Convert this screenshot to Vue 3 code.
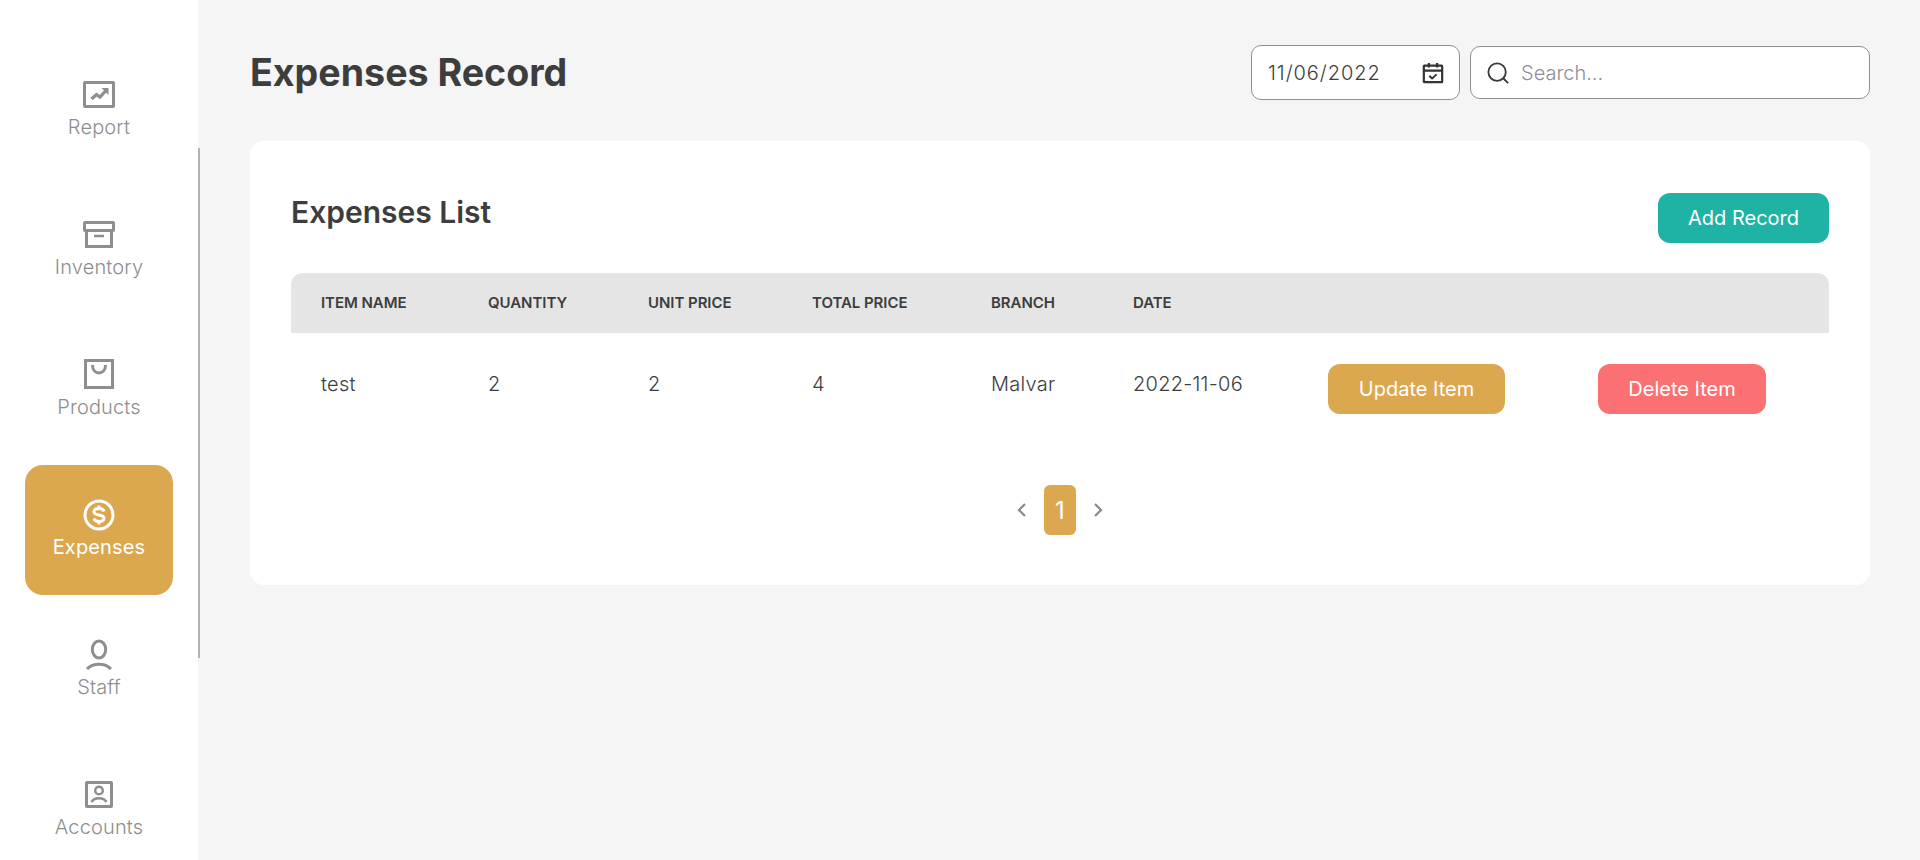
<script setup>
const navItems = [
  { label: 'Report', icon: 'report' },
  { label: 'Inventory', icon: 'inventory' },
  { label: 'Products', icon: 'products' },
  { label: 'Expenses', icon: 'expenses', active: true },
  { label: 'Staff', icon: 'staff' },
  { label: 'Accounts', icon: 'accounts' }
]
const headers = ['ITEM NAME', 'QUANTITY', 'UNIT PRICE', 'TOTAL PRICE', 'BRANCH', 'DATE', '', '']
const row = ['test', '2', '2', '4', 'Malvar', '2022-11-06']
</script>

<template>
  <div class="page">
    <aside class="sidebar">
      <nav class="nav">
        <a v-for="item in navItems" :key="item.label" class="nav-item" :class="{ active: item.active }">
          <svg class="nav-icon" viewBox="0 0 32 32" fill="none" stroke="currentColor" stroke-width="3">
            <template v-if="item.icon === 'report'">
              <rect x="1.500" y="3.500" width="29" height="24" rx="0.500" />
              <path d="M8.500 20l5-4.500 3.500 2.500 5.500-6" stroke-width="3.200" />
              <path d="M18.500 9h7v7z" fill="currentColor" stroke="none" />
            </template>
            <template v-else-if="item.icon === 'inventory'">
              <rect x="1.500" y="3.500" width="29" height="8" rx="0.500" />
              <path d="M3.500 11.500v16h25v-16" />
              <path d="M11 17h10" stroke-width="2.500" />
            </template>
            <template v-else-if="item.icon === 'products'">
              <path d="M2.500 1.500h27v27h-27z" />
              <path d="M9.500 6c0 10.500 13 10.500 13 0" />
            </template>
            <template v-else-if="item.icon === 'expenses'">
              <circle cx="16" cy="16" r="14" />
              <path d="M21 12.500c-.5-1.800-2.500-3-5-3-3 0-5 1.200-5 3.200 0 2.200 2.300 2.800 5 3.300s5 1.100 5 3.300c0 2-2 3.200-5 3.200-2.500 0-4.500-1.200-5-3" stroke-width="3" />
              <path d="M16 6.500v3M16 22.500v3" stroke-width="3" />
            </template>
            <template v-else-if="item.icon === 'staff'">
              <ellipse cx="16" cy="10.500" rx="6.700" ry="8.500" />
              <path d="M4 30c6-6.500 18-6.500 24 0" />
            </template>
            <template v-else>
              <rect x="3.500" y="3.500" width="25" height="24" rx="0.500" />
              <circle cx="16" cy="11.500" r="3.800" stroke-width="2.500" />
              <path d="M8.500 23c3-5 12-5 15 0" stroke-width="2.500" />
            </template>
          </svg>
          <span class="nav-label">{{ item.label }}</span>
        </a>
      </nav>
      <div class="scroll-thumb"></div>
    </aside>

    <main class="main">
      <header class="top">
        <h1 class="title">Expenses Record</h1>
        <div class="filters">
          <div class="date-field">
            <span class="date-value">11/06/2022</span>
            <svg class="cal" viewBox="0 0 24 24" fill="none" stroke="#333" stroke-width="2.400">
              <rect x="2" y="4" width="20" height="18" rx="0.500" />
              <path d="M2 9.500h20M7.500 1v5M16.500 1v5" />
              <path d="M8 15l3 3 5-4.500" stroke-width="2" />
            </svg>
          </div>
          <div class="search-field">
            <svg class="search-icon" viewBox="0 0 24 24" fill="none" stroke="#3a3a3a" stroke-width="2">
              <circle cx="11" cy="11" r="9.500" />
              <path d="M18 18l5 5" />
            </svg>
            <span class="placeholder">Search...</span>
          </div>
        </div>
      </header>

      <section class="card">
        <div class="card-head">
          <h2 class="card-title">Expenses List</h2>
          <button class="btn teal">Add Record</button>
        </div>
        <table class="table">
          <colgroup>
            <col class="c1" /><col class="c2" /><col class="c3" /><col class="c4" />
            <col class="c5" /><col class="c6" /><col class="c7" /><col class="c8" />
          </colgroup>
          <thead>
            <tr>
              <th v-for="(h, i) in headers" :key="i">{{ h }}</th>
            </tr>
          </thead>
          <tbody>
            <tr>
              <td v-for="(c, i) in row" :key="i"><span class="cell-text">{{ c }}</span></td>
              <td><button class="btn gold">Update Item</button></td>
              <td><button class="btn red">Delete Item</button></td>
            </tr>
          </tbody>
        </table>
        <div class="pager">
          <svg class="chev" viewBox="0 0 12 16" fill="none" stroke="#8a8a8a" stroke-width="2.200"><path d="M9 2L3 8l6 6" /></svg>
          <span class="page-num">1</span>
          <svg class="chev" viewBox="0 0 12 16" fill="none" stroke="#8a8a8a" stroke-width="2.200"><path d="M3 2l6 6-6 6" /></svg>
        </div>
      </section>
    </main>
  </div>
</template>

<style>
html, body { margin: 0; height: 100%; overflow: hidden; background: #f5f5f5; }
</style>

<style scoped>
.page {
  display: flex;
  height: 860px;
  overflow: hidden;
  background: #f5f5f5;
  font-family: Inter, "Liberation Sans", sans-serif;
  color: #3d3d3d;
}
.sidebar {
  position: relative;
  z-index: 1;
  flex: 0 0 198px;
  background: #fff;
}
.nav {
  display: flex;
  flex-direction: column;
  gap: 10px;
  padding: 45px 25px 0;
}
.nav-item {
  flex: 0 0 130px;
  display: flex;
  flex-direction: column;
  align-items: center;
  padding-top: 34px;
  box-sizing: border-box;
  border-radius: 18px;
  color: #8e8e8e;
}
.nav-item.active {
  background: #dba84f;
  color: #fff;
}
.nav-icon {
  width: 32px;
  height: 32px;
}
.nav-label {
  margin-top: 3px;
  font-size: 20px;
  line-height: 26px;
  font-weight: 300;
  letter-spacing: 0.15px;
}
.nav-item.active .nav-label { font-weight: 400; }
.scroll-thumb {
  position: absolute;
  left: 198px;
  top: 148px;
  width: 2px;
  height: 510px;
  background: #b3b3b3;
}
.main {
  flex: 1;
  min-width: 0;
  padding: 45px 50px 0 52px;
}
.top {
  display: flex;
  justify-content: space-between;
  align-items: center;
  height: 55px;
}
.title {
  margin: 0;
  font-size: 37.600px;
  line-height: 44px;
  font-weight: 700;
}
.filters {
  display: flex;
  align-items: center;
  gap: 10px;
}
.date-field {
  box-sizing: border-box;
  width: 209px;
  height: 55px;
  display: flex;
  align-items: center;
  justify-content: space-between;
  padding: 0 15px 0 16px;
  background: #fff;
  border: 1px solid #8f8f8f;
  border-radius: 10px;
  font-size: 20px;
}
.date-value { letter-spacing: 0.950px; font-weight: 300; }
.cal { width: 22px; height: 22px; }
.search-field {
  box-sizing: border-box;
  width: 400px;
  height: 53px;
  display: flex;
  align-items: center;
  gap: 12px;
  padding: 0 16px;
  background: #fff;
  border: 1px solid #8f8f8f;
  border-radius: 10px;
}
.search-icon { width: 22px; height: 22px; }
.placeholder { font-size: 20px; font-weight: 300; color: #8f8f96; }
.card {
  margin-top: 41px;
  box-sizing: border-box;
  height: 444px;
  padding: 52px 41px 0;
  background: #fff;
  border-radius: 14px;
}
.card-head {
  display: flex;
  justify-content: space-between;
  align-items: flex-start;
  height: 80px;
}
.card-title {
  margin: 0;
  font-size: 30px;
  line-height: 38px;
  font-weight: 600;
}
.btn {
  height: 50px;
  border: 0;
  border-radius: 12px;
  color: #fff;
  font-family: inherit;
  font-size: 20px;
  font-weight: 400;
}
.teal { width: 171px; background: #1fb3a5; }
.gold { width: 177px; background: #dba84f; }
.red { width: 168px; background: #fb7072; }
.table {
  width: 1538px;
  table-layout: fixed;
  border-collapse: collapse;
}
.c1 { width: 166px; }
.c2 { width: 160px; }
.c3 { width: 164px; }
.c4 { width: 179px; }
.c5 { width: 142px; }
.c6 { width: 195px; }
.c7 { width: 270px; }
.c8 { width: 262px; }
th {
  box-sizing: border-box;
  height: 60px;
  padding: 0 0 2px 31px;
  background: #e5e5e5;
  text-align: left;
  font-size: 15px;
  font-weight: 600;
  letter-spacing: -0.050px;
  white-space: nowrap;
}
th:first-child { border-top-left-radius: 12px; padding-left: 30px; }
th:last-child { border-top-right-radius: 12px; }
td {
  box-sizing: border-box;
  height: 112px;
  padding: 0 0 0 31px;
  font-size: 20px;
  font-weight: 300;
  letter-spacing: 0.250px;
  vertical-align: middle;
}
td:first-child { padding-left: 30px; }
.cell-text {
  position: relative;
  top: -5px;
}
.pager {
  display: flex;
  justify-content: center;
  align-items: center;
  gap: 16px;
  margin-top: 40px;
}
.page-num {
  width: 32px;
  height: 50px;
  display: flex;
  align-items: center;
  justify-content: center;
  background: #dba84f;
  border-radius: 6px;
  color: #fff;
  font-size: 24px;
}
.chev { width: 12px; height: 16px; }
</style>
